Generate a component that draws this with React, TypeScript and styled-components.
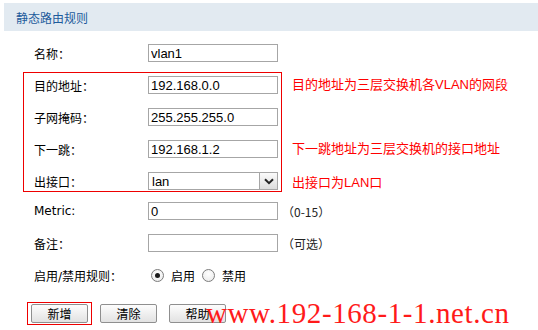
import styled, { createGlobalStyle } from 'styled-components';

const GlobalStyle = createGlobalStyle`
    body {
        margin: 0;
        background: #ffffff;
    }
`;

const cjk = `"DejaVu Sans", "Noto Sans CJK SC", sans-serif`;

type Field = { label: string; value: string; hint?: string };

const App = () => {
    return (
        <Page>
            <GlobalStyle />
            <Header>静态路由规则</Header>
            <Form>
                <Row>
                    <Label>名称：</Label>
                    <TextBox readOnly value="vlan1" />
                </Row>

                <Group>
                    <Box>
                        <Row>
                            <Label>目的地址：</Label>
                            <TextBox readOnly value="192.168.0.0" />
                        </Row>
                        <Row>
                            <Label>子网掩码：</Label>
                            <TextBox readOnly value="255.255.255.0" />
                        </Row>
                        <Row>
                            <Label>下一跳：</Label>
                            <TextBox readOnly value="192.168.1.2" />
                        </Row>
                        <Row>
                            <Label>出接口：</Label>
                            <FakeSelect>
                                <span>lan</span>
                                <Arrow>
                                    <svg width="10" height="7" viewBox="0 0 10 7">
                                        <path d="M1 1.2 L5 5.2 L9 1.2" fill="none" stroke="#222" strokeWidth="2" />
                                    </svg>
                                </Arrow>
                            </FakeSelect>
                        </Row>
                    </Box>
                    <Notes>
                        <Note>目的地址为三层交换机各VLAN的网段</Note>
                        <Note />
                        <Note>下一跳地址为三层交换机的接口地址</Note>
                        <Note $drop={2}>出接口为LAN口</Note>
                    </Notes>
                </Group>

                {([
                    { label: 'Metric:', value: '0', hint: '（0-15）' },
                    { label: '备注：', value: '', hint: '（可选）' },
                ] as Field[]).map((f) => (
                    <Row key={f.label}>
                        <Label>{f.label}</Label>
                        <TextBox readOnly value={f.value} />
                        <Hint>{f.hint}</Hint>
                    </Row>
                ))}

                <Row>
                    <Label>启用/禁用规则：</Label>
                    <Radio $checked />
                    <RadioText>启用</RadioText>
                    <Radio $gap={7} />
                    <RadioText>禁用</RadioText>
                </Row>

                <Buttons>
                    <Highlight>
                        <Button>新增</Button>
                    </Highlight>
                    <Button>清除</Button>
                    <Button>帮助</Button>
                </Buttons>
            </Form>
            <Watermark>www.192-168-1-1.net.cn</Watermark>
        </Page>
    );
};

const Page = styled.div`
    position: relative;
    width: 538px;
    height: 330px;
    padding: 3px 0 0 4px;
    box-sizing: border-box;
    overflow: hidden;
    font-family: ${cjk};
    color: #000;
`;

const Header = styled.div`
    height: 28px;
    display: flex;
    align-items: center;
    padding-left: 12px;
    background: #e2eaf1;
    color: #1d5b9c;
    font-size: 12px;
    font-family: "Noto Sans CJK SC", sans-serif;
`;

const Form = styled.div`
    display: flex;
    flex-direction: column;
    gap: 14px;
    padding: 13px 0 0 19px;
`;

const Row = styled.div`
    display: flex;
    align-items: center;
    height: 18px;
    padding-left: 11px;
`;

const Label = styled.div`
    width: 114px;
    flex: none;
    font-size: 12px;
    font-family: ${cjk};
`;

const TextBox = styled.input`
    width: 130px;
    height: 18px;
    box-sizing: border-box;
    margin: 0;
    padding: 0 2px;
    border: 1px solid #a6a6a6;
    background: #fff;
    outline: none;
    font-size: 13px;
    font-family: "Liberation Sans", sans-serif;
    color: #000;
`;

const FakeSelect = styled.div`
    width: 130px;
    height: 18px;
    box-sizing: border-box;
    border: 1px solid #a6a6a6;
    display: flex;
    align-items: center;
    justify-content: space-between;
    padding-left: 3px;
    font-size: 13px;
    font-family: "Liberation Sans", sans-serif;
`;

const Arrow = styled.div`
    width: 18px;
    height: 16px;
    box-sizing: border-box;
    border-left: 1px solid #a6a6a6;
    background: linear-gradient(#fbfbfb, #dcdcdc);
    display: flex;
    align-items: center;
    justify-content: center;
`;

const Group = styled.div`
    display: flex;
    align-items: flex-start;
    margin: -4px 0 -4px 0;
`;

const Box = styled.div`
    display: flex;
    flex-direction: column;
    gap: 14px;
    border: 1px solid #ee0000;
    padding: 3px 3px 1px 0;

    ${Row} {
        padding-left: 10px;
    }
`;

const Notes = styled.div`
    display: flex;
    flex-direction: column;
    gap: 14px;
    padding-top: 4px;
    margin-left: 10px;
`;

const Note = styled.div<{ $drop?: number }>`
    height: 18px;
    line-height: 18px;
    padding-top: ${(p) => p.$drop || 0}px;
    font-size: 13px;
    font-family: "Liberation Sans", "Noto Sans CJK SC", sans-serif;
    color: #ff0000;
    white-space: nowrap;
`;

const Hint = styled.span`
    margin-left: 4px;
    font-size: 12px;
    font-family: "Noto Sans CJK SC", sans-serif;
    color: #222;
`;

const Radio = styled.span<{ $checked?: boolean; $gap?: number }>`
    position: relative;
    width: 13px;
    height: 13px;
    box-sizing: border-box;
    margin-left: ${(p) => p.$gap ?? 3}px;
    border: 1px solid #7c7c7c;
    border-radius: 50%;
    background: radial-gradient(circle at 50% 35%, #ffffff, #e8e8e8);

    &::after {
        content: '';
        display: ${(p) => (p.$checked ? 'block' : 'none')};
        position: absolute;
        left: 3px;
        top: 3px;
        width: 5px;
        height: 5px;
        border-radius: 50%;
        background: #1a1a1a;
    }
`;

const RadioText = styled.span`
    margin-left: 7px;
    font-size: 12px;
    font-family: "Noto Sans CJK SC", sans-serif;
`;

const Buttons = styled.div`
    display: flex;
    align-items: center;
    gap: 12px;
    margin-top: 4px;
    padding-left: 4px;
`;

const Highlight = styled.div`
    border: 1px solid #ee0000;
    padding: 1px 3px;
    margin-right: -4px;
    display: flex;
`;

const Button = styled.button`
    width: 57px;
    height: 19px;
    box-sizing: border-box;
    margin: 0;
    padding: 0;
    border: 1px solid #8f8f8f;
    border-radius: 2px;
    background: linear-gradient(#fdfdfd, #e2e2e2);
    font-size: 12px;
    font-family: "Noto Sans CJK SC", sans-serif;
    color: #000;
    line-height: 17px;
`;

const Watermark = styled.div`
    position: absolute;
    left: 206px;
    top: 298px;
    font-family: "Liberation Serif", serif;
    font-size: 29px;
    line-height: 30px;
    letter-spacing: 0.6px;
    color: #ff1a1a;
    white-space: nowrap;
`;

export default App;
